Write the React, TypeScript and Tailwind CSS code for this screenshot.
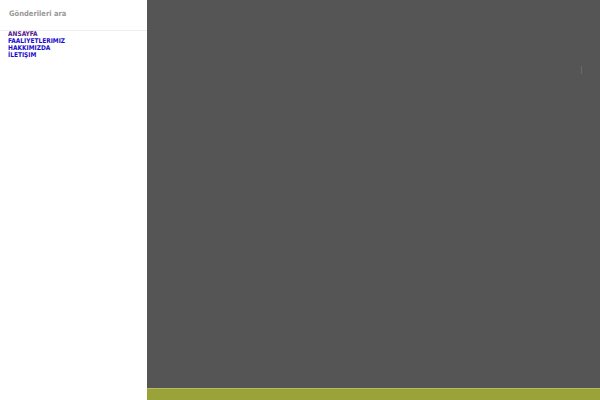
export default function App() {
  return (
    <div className="flex h-[400px] w-[600px] overflow-hidden bg-white" style={{ fontFamily: '"DejaVu Sans Condensed", "DejaVu Sans", sans-serif' }}>
      <div className="flex w-[147px] shrink-0 flex-col">
        <div className="h-[31px] border-b border-[#eeeeee] px-[9px] pt-[8px] text-[7.5px] font-bold text-[#999999]">Gönderileri ara</div>
        <ul className="px-[8px] text-[6.5px] font-bold leading-[7px]">
          <li className="text-[#551a8b]">ANSAYFA</li>
          <li className="text-[#1a0dcc]">FAALIYETLERIMIZ</li>
          <li className="text-[#1a0dcc]">HAKKIMIZDA</li>
          <li className="text-[#1a0dcc]">İLETIŞIM</li>
        </ul>
      </div>
      <div className="flex flex-1 flex-col">
        <div className="relative flex-1 bg-[#555555]">
          <div className="absolute left-[434px] top-[66px] h-[8px] w-px bg-[#6a6a6a]" />
        </div>
        <div className="h-[12px] border-t border-[#b5bd5a] bg-[#9aa23a]" />
      </div>
    </div>
  );
}
